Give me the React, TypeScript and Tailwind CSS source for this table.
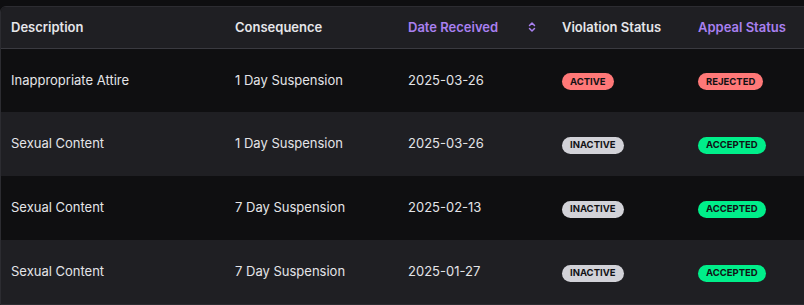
import React from "react";
import { ChevronsUpDown } from "lucide-react";

type Row = {
  description: string;
  consequence: string;
  date: string;
  violation: "ACTIVE" | "INACTIVE";
  appeal: "REJECTED" | "ACCEPTED";
};

const rows: Row[] = [
  { description: "Inappropriate Attire", consequence: "1 Day Suspension", date: "2025-03-26", violation: "ACTIVE", appeal: "REJECTED" },
  { description: "Sexual Content", consequence: "1 Day Suspension", date: "2025-03-26", violation: "INACTIVE", appeal: "ACCEPTED" },
  { description: "Sexual Content", consequence: "7 Day Suspension", date: "2025-02-13", violation: "INACTIVE", appeal: "ACCEPTED" },
  { description: "Sexual Content", consequence: "7 Day Suspension", date: "2025-01-27", violation: "INACTIVE", appeal: "ACCEPTED" },
];

const badgeColors: Record<string, string> = {
  ACTIVE: "bg-[#ff7878]",
  REJECTED: "bg-[#ff7878]",
  INACTIVE: "bg-[#d2d2d8]",
  ACCEPTED: "bg-[#00ee8a]",
};

const Badge = ({ label }: { label: string }) => (
  <span
    className={`inline-flex items-center h-[17px] px-[8px] rounded-full text-[9.5px] font-bold leading-none text-[#111114] ${badgeColors[label]}`}
  >
    {label}
  </span>
);

const App = () => {
  return (
    <div
      className="w-[804px] h-[305px] overflow-hidden bg-[#0e0e10] pt-[6px]"
      style={{ fontFamily: "Inter, 'Noto Sans', sans-serif" }}
    >
      <div className="w-[830px] border border-[#2c2c31] rounded-tl-[6px] overflow-hidden">
        <table className="w-full table-fixed border-collapse text-[13px]">
          <colgroup>
            <col className="w-[224px]" />
            <col className="w-[173px]" />
            <col className="w-[154px]" />
            <col className="w-[136px]" />
            <col />
          </colgroup>
          <thead>
            <tr className="h-[41px] bg-[#1f1f23] border-b border-[#3a3a40] text-left">
              <th className="pl-[10px] font-semibold text-[#e6e6ea]">Description</th>
              <th className="pl-[10px] font-semibold text-[#e6e6ea]">Consequence</th>
              <th className="pl-[10px] pr-[14px] font-semibold text-[#a980f0]">
                <div className="flex items-center justify-between">
                  <span>Date Received</span>
                  <ChevronsUpDown size={12} strokeWidth={3} className="text-[#a980f0]" />
                </div>
              </th>
              <th className="pl-[10px] font-semibold text-[#e6e6ea]">Violation Status</th>
              <th className="pl-[10px] font-semibold text-[#a980f0]">Appeal Status</th>
            </tr>
          </thead>
          <tbody>
            {rows.map((row, i) => (
              <tr key={i} className={`h-[64px] text-[#e4e4e8] ${i % 2 === 0 ? "bg-[#0f0f11]" : "bg-[#1f1f23]"}`}>
                <td className="pl-[10px]">{row.description}</td>
                <td className="pl-[10px]">{row.consequence}</td>
                <td className="pl-[10px]">{row.date}</td>
                <td className="pl-[10px]">
                  <Badge label={row.violation} />
                </td>
                <td className="pl-[10px]">
                  <Badge label={row.appeal} />
                </td>
              </tr>
            ))}
          </tbody>
        </table>
      </div>
    </div>
  );
};

export default App;
